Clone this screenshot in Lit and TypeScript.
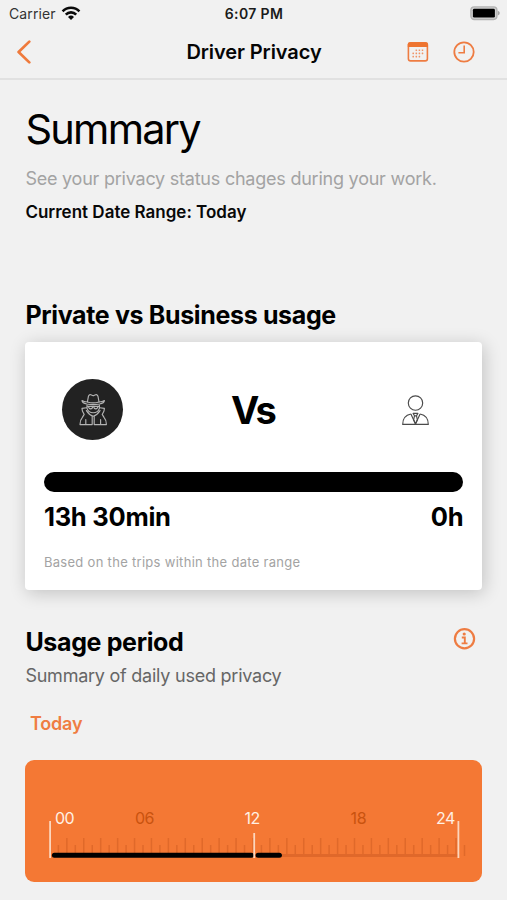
import { LitElement, html, css, svg } from "lit";
import { customElement } from "lit/decorators.js";

@customElement("status-bar")
class StatusBar extends LitElement {
  static styles = css`
    :host { display: grid; grid-template-columns: 1fr auto 1fr; align-items: center; height: 28px; padding: 0 7px 0 9px; box-sizing: border-box; }
    .left { display: flex; align-items: center; gap: 5px; font-size: 14px; line-height: 20px; color: #333; letter-spacing: 0.12px; }
    .time { font-size: 14px; font-weight: 600; line-height: 20px; color: #1b1b1b; letter-spacing: 0.35px; margin-right: 1px; }
    .battery { justify-self: end; display: block; }
    svg { display: block; }
  `;
  render() {
    return html`
      <div class="left"><span>Carrier</span>
        <svg width="20" height="16" viewBox="0 0 20 16">
          <g fill="none" stroke="#0a0a0a" stroke-width="2.6">
            <path d="M1.6 5.3a11.8 11.8 0 0 1 16.8 0" />
            <path d="M4.8 8.6a7.3 7.3 0 0 1 10.4 0" />
          </g>
          <path d="M10 13.9l-3-3a4.3 4.3 0 0 1 6 0z" fill="#0a0a0a" />
        </svg>
      </div>
      <div class="time">6:07 PM</div>
      <svg class="battery" width="31" height="16" viewBox="0 0 31 16">
        <rect x="1.9" y="0.9" width="26" height="12.6" rx="3.4" fill="#d0d0d0" stroke="#b2b2b2" stroke-width="1.4" />
        <rect x="3.9" y="2.8" width="22" height="8.8" rx="1.4" fill="#000" />
        <path d="M28.8 4.7q2 .8 2 2.4t-2 2.4z" fill="#a5a5a5" />
      </svg>
    `;
  }
}

@customElement("nav-bar")
class NavBar extends LitElement {
  static styles = css`
    :host { display: grid; grid-template-columns: 1fr auto 1fr; align-items: center; height: 52px; padding: 0 15px 2px 16px; box-sizing: border-box; border-bottom: 2px solid #e1e1e1; }
    .title { font-size: 20px; font-weight: 600; line-height: 26px; color: #050505; letter-spacing: -0.08px; }
    .actions { display: flex; justify-content: flex-end; gap: 24px; margin-right: 17px; }
    svg { display: block; }
  `;
  render() {
    const dots: [number, number][] = [];
    for (let r = 0; r < 3; r++)
      for (let c = r === 0 ? 1 : 0; c < (r === 2 ? 3 : 4); c++) dots.push([5.4 + c * 3.1, 9.4 + r * 3.2]);
    return html`
      <svg width="16" height="24" viewBox="0 0 16 24">
        <path d="M13.3 1.6L2.6 12l10.7 10.4" fill="none" stroke="#ef7a3c" stroke-width="2.7" stroke-linecap="round" stroke-linejoin="round" />
      </svg>
      <div class="title">Driver Privacy</div>
      <div class="actions">
        <svg width="22" height="22" viewBox="0 0 22 22">
          <rect x="1.4" y="1.9" width="19" height="18" rx="2.2" fill="none" stroke="#ee7c42" stroke-width="1.6" />
          <path d="M.8 6V3.6Q.8 1.2 3.2 1.2h15.4q2.4 0 2.4 2.4V6z" fill="#ee7430" />
          ${dots.map(([x, y]) => svg`<rect x=${x} y=${y - 1} width="1.6" height="1.6" rx=".4" fill="#ef9468" />`)}
        </svg>
        <svg width="22" height="22" viewBox="0 0 22 22">
          <circle cx="11" cy="11" r="9.7" fill="none" stroke="#ee7c42" stroke-width="1.8" />
          <path d="M11.2 4.6v7.2H5.4" fill="none" stroke="#ee7c42" stroke-width="1.6" />
        </svg>
      </div>
    `;
  }
}

@customElement("usage-card")
class UsageCard extends LitElement {
  static styles = css`
    :host { display: flex; flex-direction: column; box-sizing: border-box; height: 248px; padding: 37px 19px 0 18.5px; background: #fff; border-radius: 4px; box-shadow: 2px 3px 18px rgba(0, 0, 0, 0.2); }
    .versus { display: grid; grid-template-columns: 98px 1fr 97px; align-items: center; justify-items: center; height: 61px; }
    .badge { width: 61px; height: 61px; border-radius: 50%; background: #222; display: flex; align-items: center; justify-content: center; }
    .vs { font-size: 38px; font-weight: 700; line-height: 46px; color: #000; letter-spacing: -1.9px; margin-right: 2.4px; }
    .bar { height: 19.5px; margin-top: 32px; border-radius: 10px; background: #000; }
    .totals { display: flex; justify-content: space-between; margin-top: 10px; font-size: 25.5px; font-weight: 700; line-height: 30px; color: #000; letter-spacing: -0.25px; }
    .note { margin-top: 21px; font-size: 13px; line-height: 18px; color: #a3a3a3; letter-spacing: 0.3px; }
    svg { display: block; }
  `;
  render() {
    return html`
      <div class="versus">
        <div class="badge">
          <svg width="28" height="34" viewBox="0 0 28 34">
            <g fill="none" stroke="#b4b4b4" stroke-width="1.15" stroke-linejoin="round" stroke-linecap="round">
              <path d="M8.4 9L9.4 3.4Q10 1.2 11.8 1.8L14.2 2.8 16.6 1.8Q18.4 1.2 19 3.4L20 9" />
              <path d="M8.4 9Q14.2 10.8 20 9Q23.6 8.8 25.4 7.6Q25.2 10 20.6 11Q14.2 12.2 7.8 11Q3.2 10 3 7.6Q4.8 8.8 8.4 9" />
              <path d="M8 12v3.4Q9.4 19.6 14.2 19.8Q19 19.6 20.4 15.4V12" />
              <path d="M8.6 13.3h11.2M9.4 13.3q.3 2.6 2.2 2.6t2.2-2.2h.8q.3 2.2 2.2 2.2t2.2-2.6" />
              <path d="M7.6 14.8L3 15.4 3.4 18 5.2 21.4 3.4 24.4Q1 27 1 31.6H13.2V23.4" />
              <path d="M20.8 14.8L25.4 15.4 25 18 23.2 21.4 25 24.4Q27.4 27 27.4 31.6H15.2V23.4" />
              <path d="M7.4 17.6Q10 21.8 14.2 23.2Q18.4 21.8 21 17.6M6.8 26.5V31M21.6 26.5V31" />
            </g>
          </svg>
        </div>
        <div class="vs">Vs</div>
        <svg width="28" height="32" viewBox="0 0 28 32">
          <g fill="none" stroke="#4a4a4a" stroke-width="1.15" stroke-linejoin="round">
            <circle cx="14.5" cy="9" r="7.2" />
            <path d="M9.9 20Q1.7 21.6 1.7 30.4H27.3Q27.3 21.6 19.1 20" />
            <path d="M9.9 20L14.5 30 19.1 20" />
            <path d="M12.1 19.4h4.8l-1.4 2.4h-2zM13.5 21.8l-.9 4 1.9 4 1.9-4-.9-4" />
          </g>
        </svg>
      </div>
      <div class="bar"></div>
      <div class="totals"><span>13h 30min</span><span>0h</span></div>
      <div class="note">Based on the trips within the date range</div>
    `;
  }
}

@customElement("day-timeline")
class DayTimeline extends LitElement {
  static styles = css`
    :host { display: block; height: 122px; border-radius: 9px; background: #f47834; overflow: hidden; }
    svg { display: block; }
    .label { font-family: Inter, "Liberation Sans", sans-serif; font-size: 16px; letter-spacing: -0.4px; fill: #fff0e4; }
    .dim { fill: #c9530f; }
    .tick { stroke: #e0692a; stroke-width: 1.5; }
    .major { stroke: #fcd6bd; stroke-width: 1.8; }
    .track { fill: #e0682a; }
    .used { fill: #000; }
  `;
  render() {
    const labels = [
      { x: 29.3, t: "00", dim: false },
      { x: 109.3, t: "06", dim: true },
      { x: 218.8, t: "12", dim: false },
      { x: 325, t: "18", dim: true },
      { x: 410.4, t: "24", dim: false },
    ];
    const ticks = Array.from({ length: 49 }, (_, i) => ({ x: 32.8 + i * 8.46, tall: i % 2 === 1 }));
    return html`
      <svg width="457" height="122" viewBox="-0.6 0 457 122">
        ${labels.map((l) => svg`<text class=${l.dim ? "label dim" : "label"} x=${l.x} y="64">${l.t}</text>`)}
        ${ticks.map((k) => svg`<line class="tick" x1=${k.x} x2=${k.x} y1=${k.tall ? 78 : 85} y2="96" />`)}
        <rect class="track" x="26" y="94" width="406" height="3" />
        <rect class="used" x="26.3" y="92.8" width="202" height="5" rx="2.5" />
        <rect class="used" x="230" y="92.8" width="26.3" height="5" rx="2.5" />
        <line class="major" x1="24.5" x2="24.5" y1="61" y2="98" />
        <line class="major" x1="228.6" x2="228.6" y1="73" y2="98" />
        <line class="major" x1="432.8" x2="432.8" y1="61" y2="98" />
      </svg>
    `;
  }
}

@customElement("app-root")
class AppRoot extends LitElement {
  static styles = css`
    :host { display: flex; flex-direction: column; box-sizing: border-box; width: 507px; height: 900px; overflow: hidden; background: #f1f1f1; font-family: Inter, "Liberation Sans", sans-serif; color: #000; white-space: nowrap; }
    main { display: flex; flex-direction: column; padding: 23.5px 24.6px 18px 25.4px; }
    .summary { font-size: 41.5px; line-height: 50px; letter-spacing: -1.75px; font-weight: 400; margin: 0; }
    .lead { margin: 13px 0 0; font-size: 18px; line-height: 24px; letter-spacing: -0.23px; color: #a3a3a3; }
    .range { margin: 10px 0 0; font-size: 17px; line-height: 22px; font-weight: 600; color: #080808; }
    h2 { margin: 0; font-size: 25px; line-height: 30px; font-weight: 700; letter-spacing: -0.35px; }
    .usage { margin: 77px 0 12.5px; }
    .period { display: flex; justify-content: space-between; align-items: flex-start; margin-top: 37px; padding-right: 6.4px; }
    .sub { margin: 6.5px 0 0; font-size: 18px; line-height: 24px; letter-spacing: -0.24px; color: #666; }
    .today { margin: 24px 0 24.5px 4.6px; font-size: 18px; line-height: 24px; font-weight: 600; letter-spacing: -0.2px; color: #ef7d42; }
    svg { display: block; }
  `;
  render() {
    return html`
      <status-bar></status-bar>
      <nav-bar></nav-bar>
      <main>
        <h1 class="summary">Summary</h1>
        <p class="lead">See your privacy status chages during your work.</p>
        <p class="range">Current Date Range: Today</p>
        <h2 class="usage">Private vs Business usage</h2>
        <usage-card></usage-card>
        <div class="period">
          <h2>Usage period</h2>
          <svg width="23" height="23" viewBox="0 0 23 23">
            <circle cx="11.5" cy="11.7" r="9.6" fill="none" stroke="#ee7c42" stroke-width="2.2" />
            <circle cx="11.2" cy="7" r="1.6" fill="#ee7c42" />
            <path d="M8.8 10.5h3v5.8M8.6 16.4h5.9" fill="none" stroke="#ee7c42" stroke-width="1.9" />
          </svg>
        </div>
        <p class="sub">Summary of daily used privacy</p>
        <div class="today">Today</div>
        <day-timeline></day-timeline>
      </main>
    `;
  }
}
